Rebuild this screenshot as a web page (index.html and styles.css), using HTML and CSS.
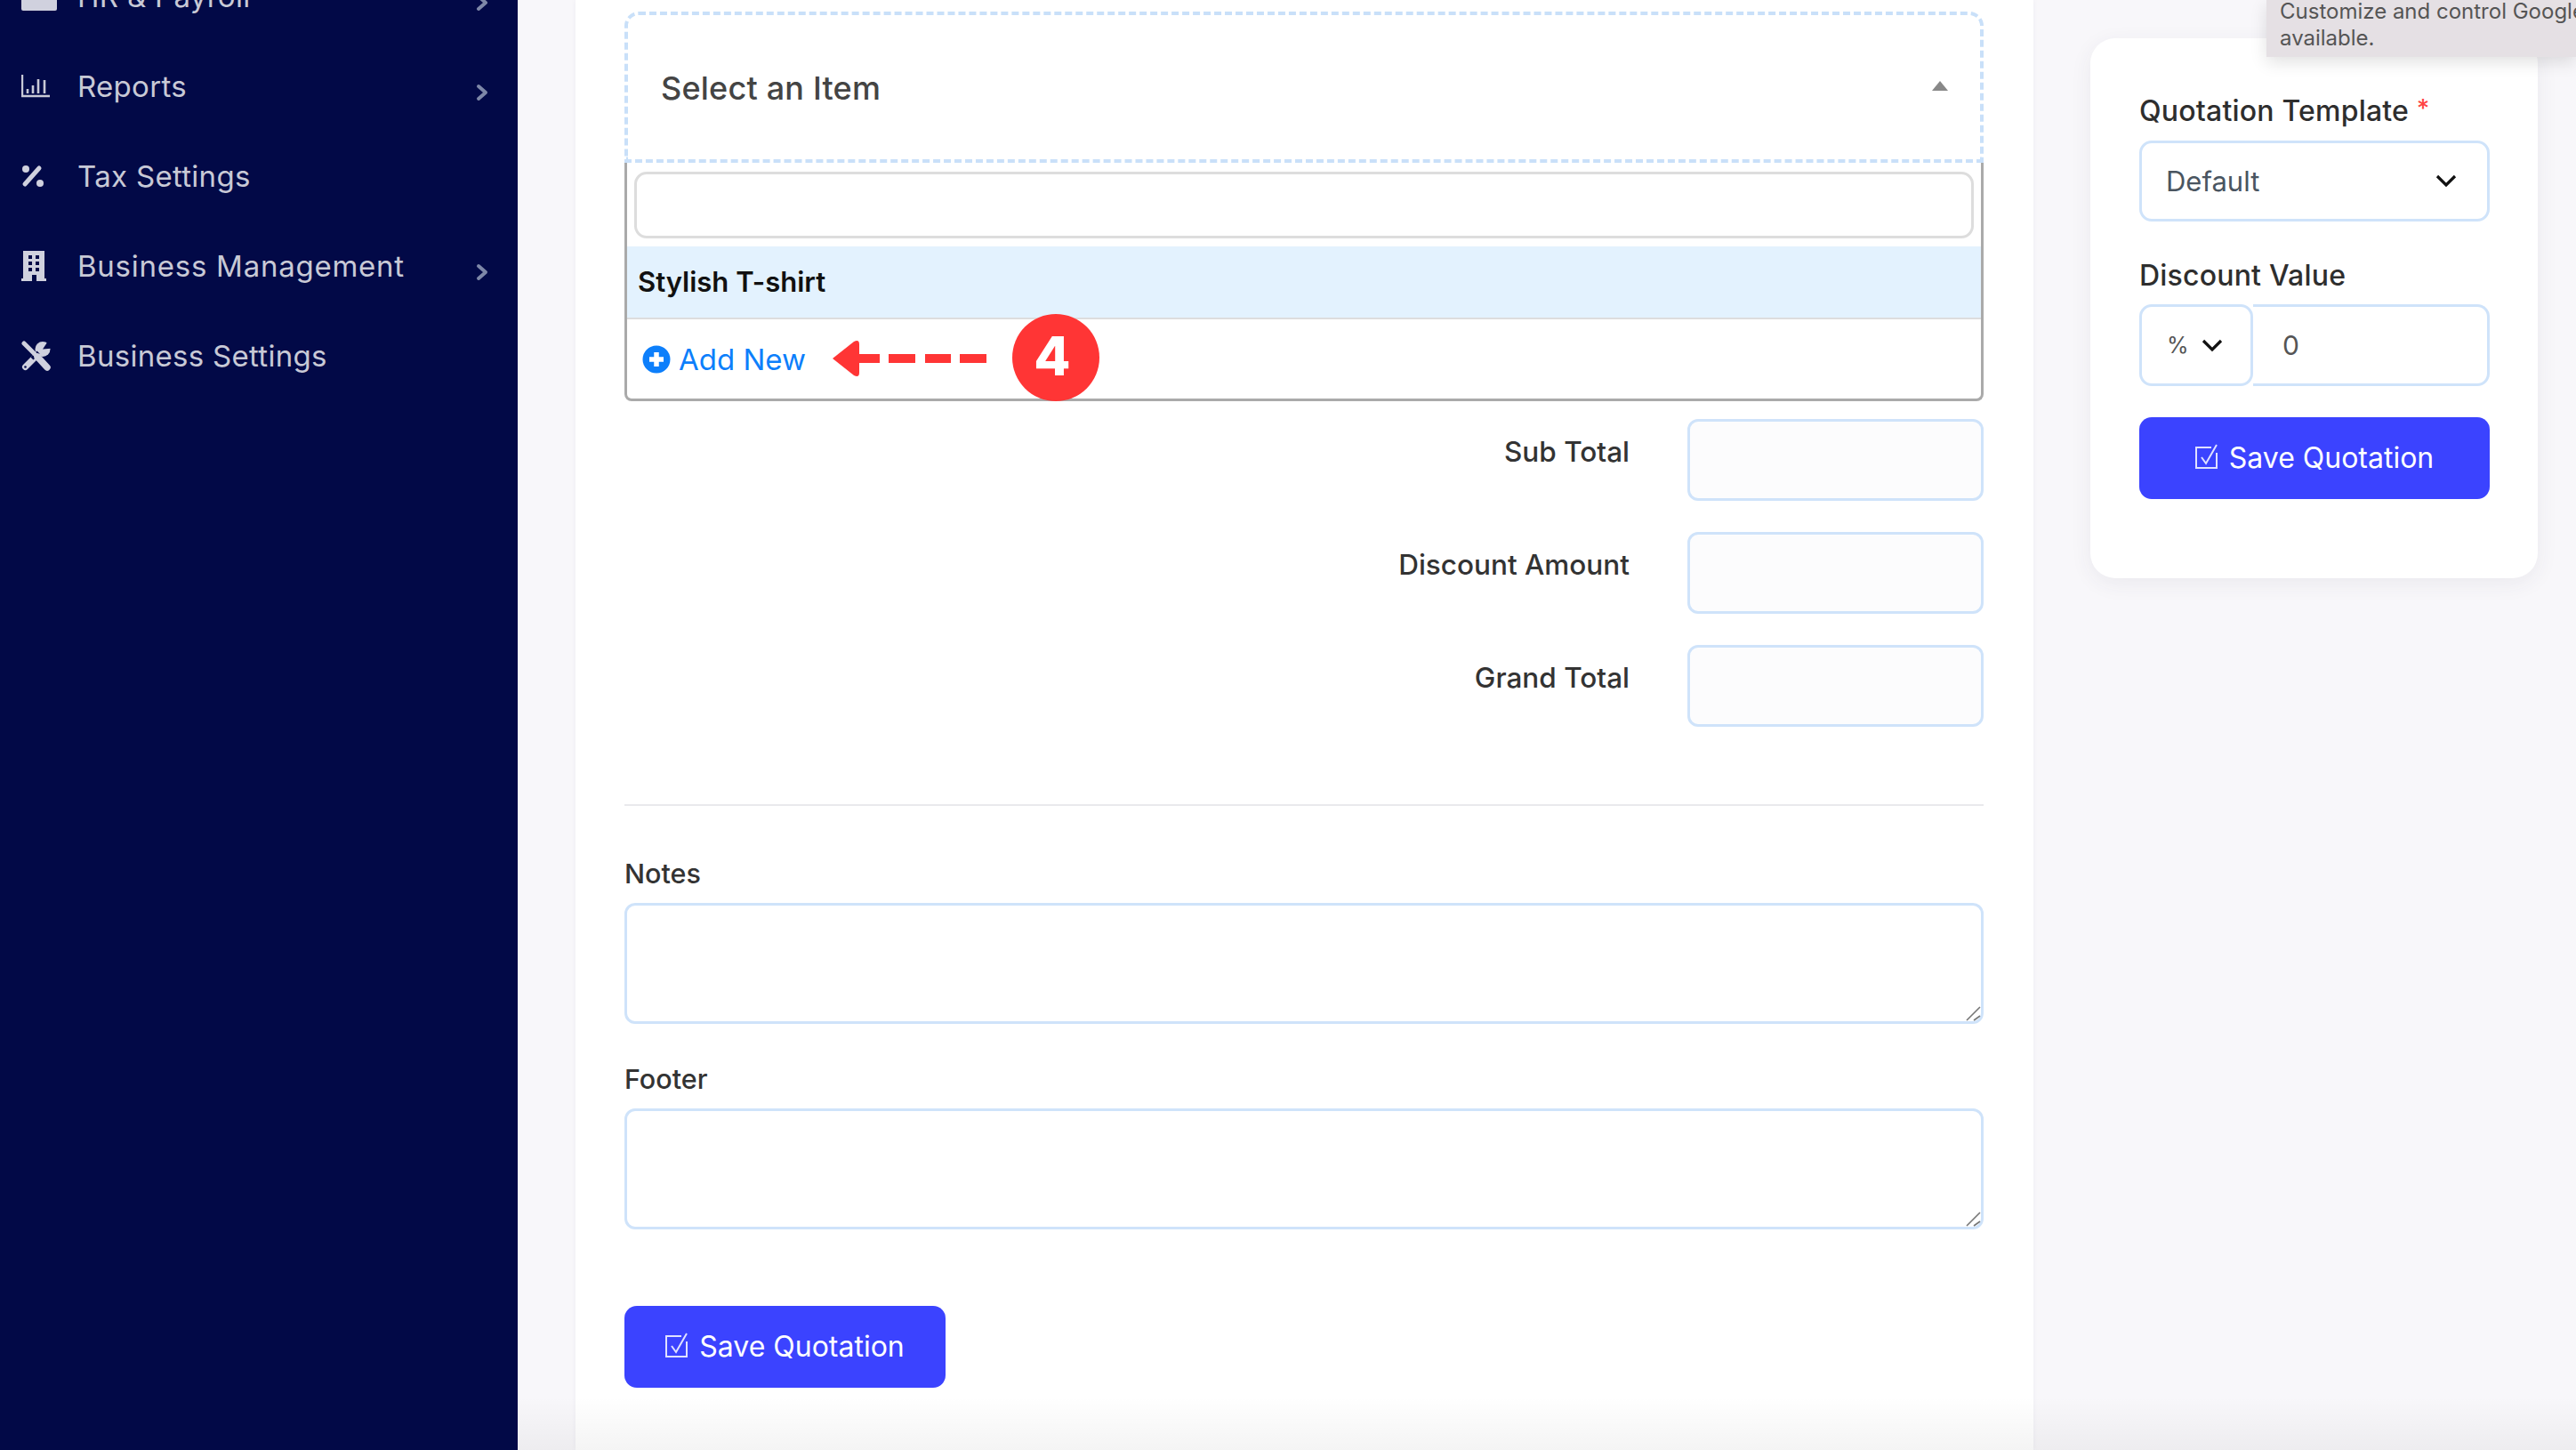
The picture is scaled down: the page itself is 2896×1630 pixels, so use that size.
FILE: index.html
```html
<!DOCTYPE html>
<html lang="en">
<head>
<meta charset="utf-8">
<title>Quotation</title>
<link rel="stylesheet" href="styles.css">
</head>
<body>
<div class="app">
  <nav class="sidebar">
    <div class="nav-item nav-first">
      <svg class="nav-icon" width="40" height="32" viewBox="0 0 40 32"><rect width="40" height="32" rx="2" fill="#d0d1de"/></svg>
      <span class="nav-label">HR &amp; Payroll</span>
      <svg class="nav-chev" width="14" height="20" viewBox="0 0 14 20"><path d="M3 3l8 7-8 7" fill="none" stroke="#7e88a8" stroke-width="4" stroke-linecap="round" stroke-linejoin="round"/></svg>
    </div>
    <div class="nav-item">
      <svg class="nav-icon" width="32" height="26" viewBox="0 0 32 26"><path d="M1 0v24h31" fill="none" stroke="#c8c9d6" stroke-width="2.400"/><path d="M7 16v5M13 12v9M19 5v16M26 6v15" stroke="#c8c9d6" stroke-width="2.600" fill="none"/></svg>
      <span class="nav-label">Reports</span>
      <svg class="nav-chev" width="14" height="20" viewBox="0 0 14 20"><path d="M3 3l8 7-8 7" fill="none" stroke="#7e88a8" stroke-width="4" stroke-linecap="round" stroke-linejoin="round"/></svg>
    </div>
    <div class="nav-item">
      <svg class="nav-icon" width="26" height="26" viewBox="0 0 26 26"><path d="M20 4L4 22" stroke="#d0d1de" stroke-width="5" stroke-linecap="round"/><circle cx="5" cy="5" r="4" fill="#d0d1de"/><circle cx="21" cy="21" r="4" fill="#d0d1de"/></svg>
      <span class="nav-label">Tax Settings</span>
    </div>
    <div class="nav-item">
      <svg class="nav-icon" width="28" height="34" viewBox="0 0 28 34"><path d="M2 0h24v31h2v3H0v-3h2z" fill="#d0d1de"/><g fill="#020947"><rect x="8" y="5" width="4" height="4"/><rect x="16" y="5" width="4" height="4"/><rect x="8" y="12" width="4" height="4"/><rect x="16" y="12" width="4" height="4"/><rect x="8" y="19" width="4" height="4"/><rect x="16" y="19" width="4" height="4"/><rect x="12" y="27" width="5" height="7"/></g></svg>
      <span class="nav-label nav-label-wide">Business Management</span>
      <svg class="nav-chev" width="14" height="20" viewBox="0 0 14 20"><path d="M3 3l8 7-8 7" fill="none" stroke="#7e88a8" stroke-width="4" stroke-linecap="round" stroke-linejoin="round"/></svg>
    </div>
    <div class="nav-item">
      <svg class="nav-icon" width="33" height="34" viewBox="0 0 33 34">
        <circle cx="24" cy="9.500" r="8.500" fill="#d0d1de"/>
        <path d="M24 9.500L31 -1H40V8z" fill="#020947"/>
        <path d="M4.500 29.500L19 15" stroke="#d0d1de" stroke-width="7" stroke-linecap="round"/>
        <circle cx="4.500" cy="29.500" r="1.300" fill="#020947"/>
        <path d="M14 15l3 3" stroke="#020947" stroke-width="10"/>
        <path d="M3 3l12 12" stroke="#d0d1de" stroke-width="5" stroke-linecap="round"/>
        <path d="M18 18l11 12" stroke="#d0d1de" stroke-width="7.500" stroke-linecap="round"/>
      </svg>
      <span class="nav-label">Business Settings</span>
    </div>
  </nav>

  <main class="content">
    <section class="card">
      <div class="picker">
        <div class="picker-head">
          <span class="picker-title">Select an Item</span>
          <span class="picker-caret"></span>
        </div>
        <div class="picker-panel">
          <input class="picker-search" type="text" aria-label="Search">
          <div class="picker-option">Stylish T-shirt</div>
          <div class="picker-add">
            <svg class="add-icon" width="32" height="32" viewBox="0 0 32 32"><circle cx="16" cy="16" r="15.500" fill="#0d7ffb"/><path d="M16 8v16M8 16h16" stroke="#fff" stroke-width="5.500"/></svg>
            <span class="add-text">Add New</span>
            <svg class="callout-arrow" width="174" height="40" viewBox="0 0 174 40"><path d="M0 20L24 1q6-3 6 3v32q0 6-6 3z" fill="#ff3535"/><path d="M28 15h25v10H28zM63 15h30v10H63zM104 15h29v10h-29zM143 15h30v10h-30z" fill="#ff3535"/></svg>
            <span class="callout-badge">4</span>
          </div>
        </div>
      </div>

      <div class="totals">
        <div class="total-row"><label class="total-label">Sub Total</label><input class="field total-input" type="text" aria-label="Sub Total"></div>
        <div class="total-row"><label class="total-label">Discount Amount</label><input class="field total-input" type="text" aria-label="Discount Amount"></div>
        <div class="total-row"><label class="total-label">Grand Total</label><input class="field total-input" type="text" aria-label="Grand Total"></div>
      </div>

      <hr class="divider">

      <label class="form-label notes-label">Notes</label>
      <div class="area-wrap">
        <textarea class="field area" aria-label="Notes"></textarea>
        <svg class="grip" width="17" height="17" viewBox="0 0 17 17"><path d="M1 16L16 1M9 16l7-5" stroke="#777" stroke-width="1.600" fill="none"/></svg>
      </div>
      <label class="form-label footer-label">Footer</label>
      <div class="area-wrap">
        <textarea class="field area" aria-label="Footer"></textarea>
        <svg class="grip" width="17" height="17" viewBox="0 0 17 17"><path d="M1 16L16 1M9 16l7-5" stroke="#777" stroke-width="1.600" fill="none"/></svg>
      </div>

      <button class="btn btn-main" type="button">
        <svg class="btn-icon" width="26" height="28" viewBox="0 0 26 28"><path d="M18 4H1v23h23V10" fill="none" stroke="#dfe1ff" stroke-width="2"/><path d="M7 15l5 7L24 1" fill="none" stroke="#dfe1ff" stroke-width="2"/></svg>
        <span class="btn-text">Save Quotation</span>
      </button>
    </section>

    <aside class="side-card">
      <label class="form-label side-label">Quotation Template <span class="req">*</span></label>
      <div class="field select-box">
        <span class="select-value">Default</span>
        <svg width="24" height="15" viewBox="0 0 24 15"><path d="M2 2l10 10L22 2" fill="none" stroke="#111" stroke-width="3.200"/></svg>
      </div>
      <label class="form-label side-label discount-label">Discount Value</label>
      <div class="discount-group">
        <div class="field unit-box">
          <span class="unit-value">%</span>
          <svg width="24" height="15" viewBox="0 0 24 15"><path d="M2 2l10 10L22 2" fill="none" stroke="#111" stroke-width="3.200"/></svg>
        </div>
        <div class="field amount-box">0</div>
      </div>
      <button class="btn btn-side" type="button">
        <svg class="btn-icon" width="26" height="28" viewBox="0 0 26 28"><path d="M18 4H1v23h23V10" fill="none" stroke="#dfe1ff" stroke-width="2"/><path d="M7 15l5 7L24 1" fill="none" stroke="#dfe1ff" stroke-width="2"/></svg>
        <span class="btn-text">Save Quotation</span>
      </button>
    </aside>

    <div class="tooltip">
      <div class="tooltip-line">Customize and control Google Chrome</div>
      <div>available.</div>
    </div>
    <div class="bottom-fade"></div>
  </main>
</div>
</body>
</html>
```

FILE: styles.css
```css
* { box-sizing: border-box; }
html, body { margin: 0; height: 100%; overflow: hidden; }
body { font-family: Inter, "Liberation Sans", sans-serif; background: #f8f7fa; color: #333; }

.app { display: flex; height: 1630px; }

.sidebar {
  width: 582px;
  flex: none;
  background: #020947;
  overflow: hidden;
}
.nav-item {
  position: relative;
  display: flex;
  align-items: center;
  height: 101px;
  padding-left: 87px;
  color: #c8c9d6;
  font-size: 33px;
  letter-spacing: 0.3px;
}
.nav-label-wide { letter-spacing: 0.75px; }
.nav-first { margin-top: -55px; }
.nav-icon { position: absolute; left: 24px; top: 50%; transform: translateY(-50%); }
.nav-chev { position: absolute; left: 535px; top: 48px; }

.content { position: relative; flex: 1; display: flex; align-items: flex-start; padding-left: 65px; height: 100%; }

.card {
  width: 1639px;
  height: 100%;
  flex: none;
  background: #fff;
  padding: 13px 56px 0 55px;
  box-shadow: 0 0 6px rgba(60, 50, 90, .05);
}

.picker-head {
  height: 170px;
  display: flex;
  align-items: center;
  justify-content: space-between;
  padding: 2px 36px 0 37px;
  border: 4px dashed #c9e0f9;
  border-radius: 16px 16px 0 0;
}
.picker-title { font-size: 36px; color: #444; font-weight: 500; letter-spacing: 0.2px; }
.picker-caret {
  width: 0; height: 0;
  border-left: 9px solid transparent;
  border-right: 9px solid transparent;
  border-bottom: 11px solid #888;
  margin-top: -5px;
}
.picker-panel {
  height: 268px;
  border: solid #aaa;
  border-width: 0 3px 3px;
  border-radius: 0 0 8px 8px;
  padding-top: 10px;
}
.picker-search {
  display: block;
  width: calc(100% - 16px);
  height: 75px;
  margin: 0 8px;
  background: #fff;
  border: 3px solid #ddd;
  border-radius: 14px;
  outline: none;
}
.picker-option {
  height: 82px;
  margin-top: 9px;
  display: flex;
  align-items: center;
  padding: 0 0 2px 12px;
  background: #e3f2fe;
  border-bottom: 2px solid #ddd;
  font-size: 31px;
  font-weight: 600;
  color: #111;
}
.picker-add {
  position: relative;
  display: flex;
  align-items: center;
  height: 90px;
  padding-left: 17px;
}
.add-text { margin-left: 9px; font-size: 33px; color: #0d7ffb; }
.callout-arrow { position: absolute; left: 231px; top: 24px; }
.callout-badge {
  position: absolute;
  left: 433px;
  top: -6px;
  width: 98px;
  height: 98px;
  border-radius: 50%;
  background: #ff3535;
  color: #fff;
  font-size: 60px;
  font-weight: 800;
  line-height: 94px;
  text-align: center;
  padding-right: 8px;
}

.totals { margin-top: 20px; display: flex; flex-direction: column; gap: 35px; }
.total-row { display: flex; justify-content: flex-end; gap: 65px; }
.total-label {
  font-size: 31.500px;
  font-weight: 500;
  line-height: 44px;
  padding-top: 15px;
  color: #333;
}
.field {
  background: #fff;
  border: 3px solid #cfe3fa;
  border-radius: 12px;
  outline: none;
}
.total-input { width: 333px; height: 92px; background: #fcfcfd; }

.divider { margin: 87px 0 0; border: 0; border-top: 2px solid #e9e9ec; }

.form-label { display: block; font-size: 30.500px; font-weight: 500; line-height: 44px; color: #333; }
.notes-label { margin-top: 54px; }
.footer-label { margin-top: 40px; }

.area-wrap { position: relative; margin-top: 11px; }
.area { display: block; width: 100%; height: 136px; resize: none; }
.grip { position: absolute; right: 3px; bottom: 3px; }

.btn {
  display: flex;
  align-items: center;
  justify-content: center;
  gap: 12px;
  height: 92px;
  background: #3b43ff;
  border: 0;
  border-radius: 14px;
  color: #fff;
  font-family: inherit;
  font-size: 32px;
}
.btn-icon { margin-top: -4px; }
.btn-text { margin-top: -2px; }
.btn-main { width: 361px; margin-top: 86px; }
.btn-side { width: 394px; margin-top: 35px; }

.side-card {
  width: 503px;
  flex: none;
  height: 607px;
  margin: 43px 0 0 64px;
  padding: 60px 54px 0 55px;
  background: #fff;
  border-radius: 28px;
  box-shadow: 0 6px 24px rgba(60, 50, 90, .07);
}
.side-label { color: #2e2e2e; font-size: 32px; letter-spacing: 0.2px; }
.req { color: #ff4444; font-size: 28px; line-height: 0; vertical-align: 4px; }
.discount-label { margin-top: 39px; }
.select-box {
  margin-top: 11px;
  width: 394px;
  height: 91px;
  display: flex;
  align-items: center;
  justify-content: space-between;
  padding: 0 34px 0 27px;
  border-radius: 14px;
}
.select-value { font-size: 31px; color: #4a5560; }
.discount-group { display: flex; margin-top: 10px; }
.unit-box {
  width: 128px;
  height: 92px;
  display: flex;
  align-items: center;
  gap: 14px;
  padding-left: 28px;
  border-radius: 14px;
}
.unit-value { font-size: 25px; color: #555; }
.amount-box {
  flex: 1;
  height: 92px;
  display: flex;
  align-items: center;
  padding-left: 33px;
  font-size: 30px;
  color: #555;
  border-left: 0;
  border-radius: 0 14px 14px 0;
}

.tooltip {
  position: absolute;
  left: 1966px;
  right: 0;
  top: 0;
  height: 64px;
  padding: 0 0 0 15px;
  overflow: hidden;
  background: #e5e0e4;
  box-shadow: 0 6px 18px rgba(0, 0, 0, .12);
  color: #555;
  font-size: 24px;
  line-height: 30px;
  white-space: nowrap;
}
.tooltip-line { margin-top: -2px; }

.bottom-fade {
  position: absolute;
  left: 0; right: 0; bottom: 0;
  height: 60px;
  background: linear-gradient(rgba(0,0,0,0), rgba(0,0,0,.045));
  pointer-events: none;
}
```
